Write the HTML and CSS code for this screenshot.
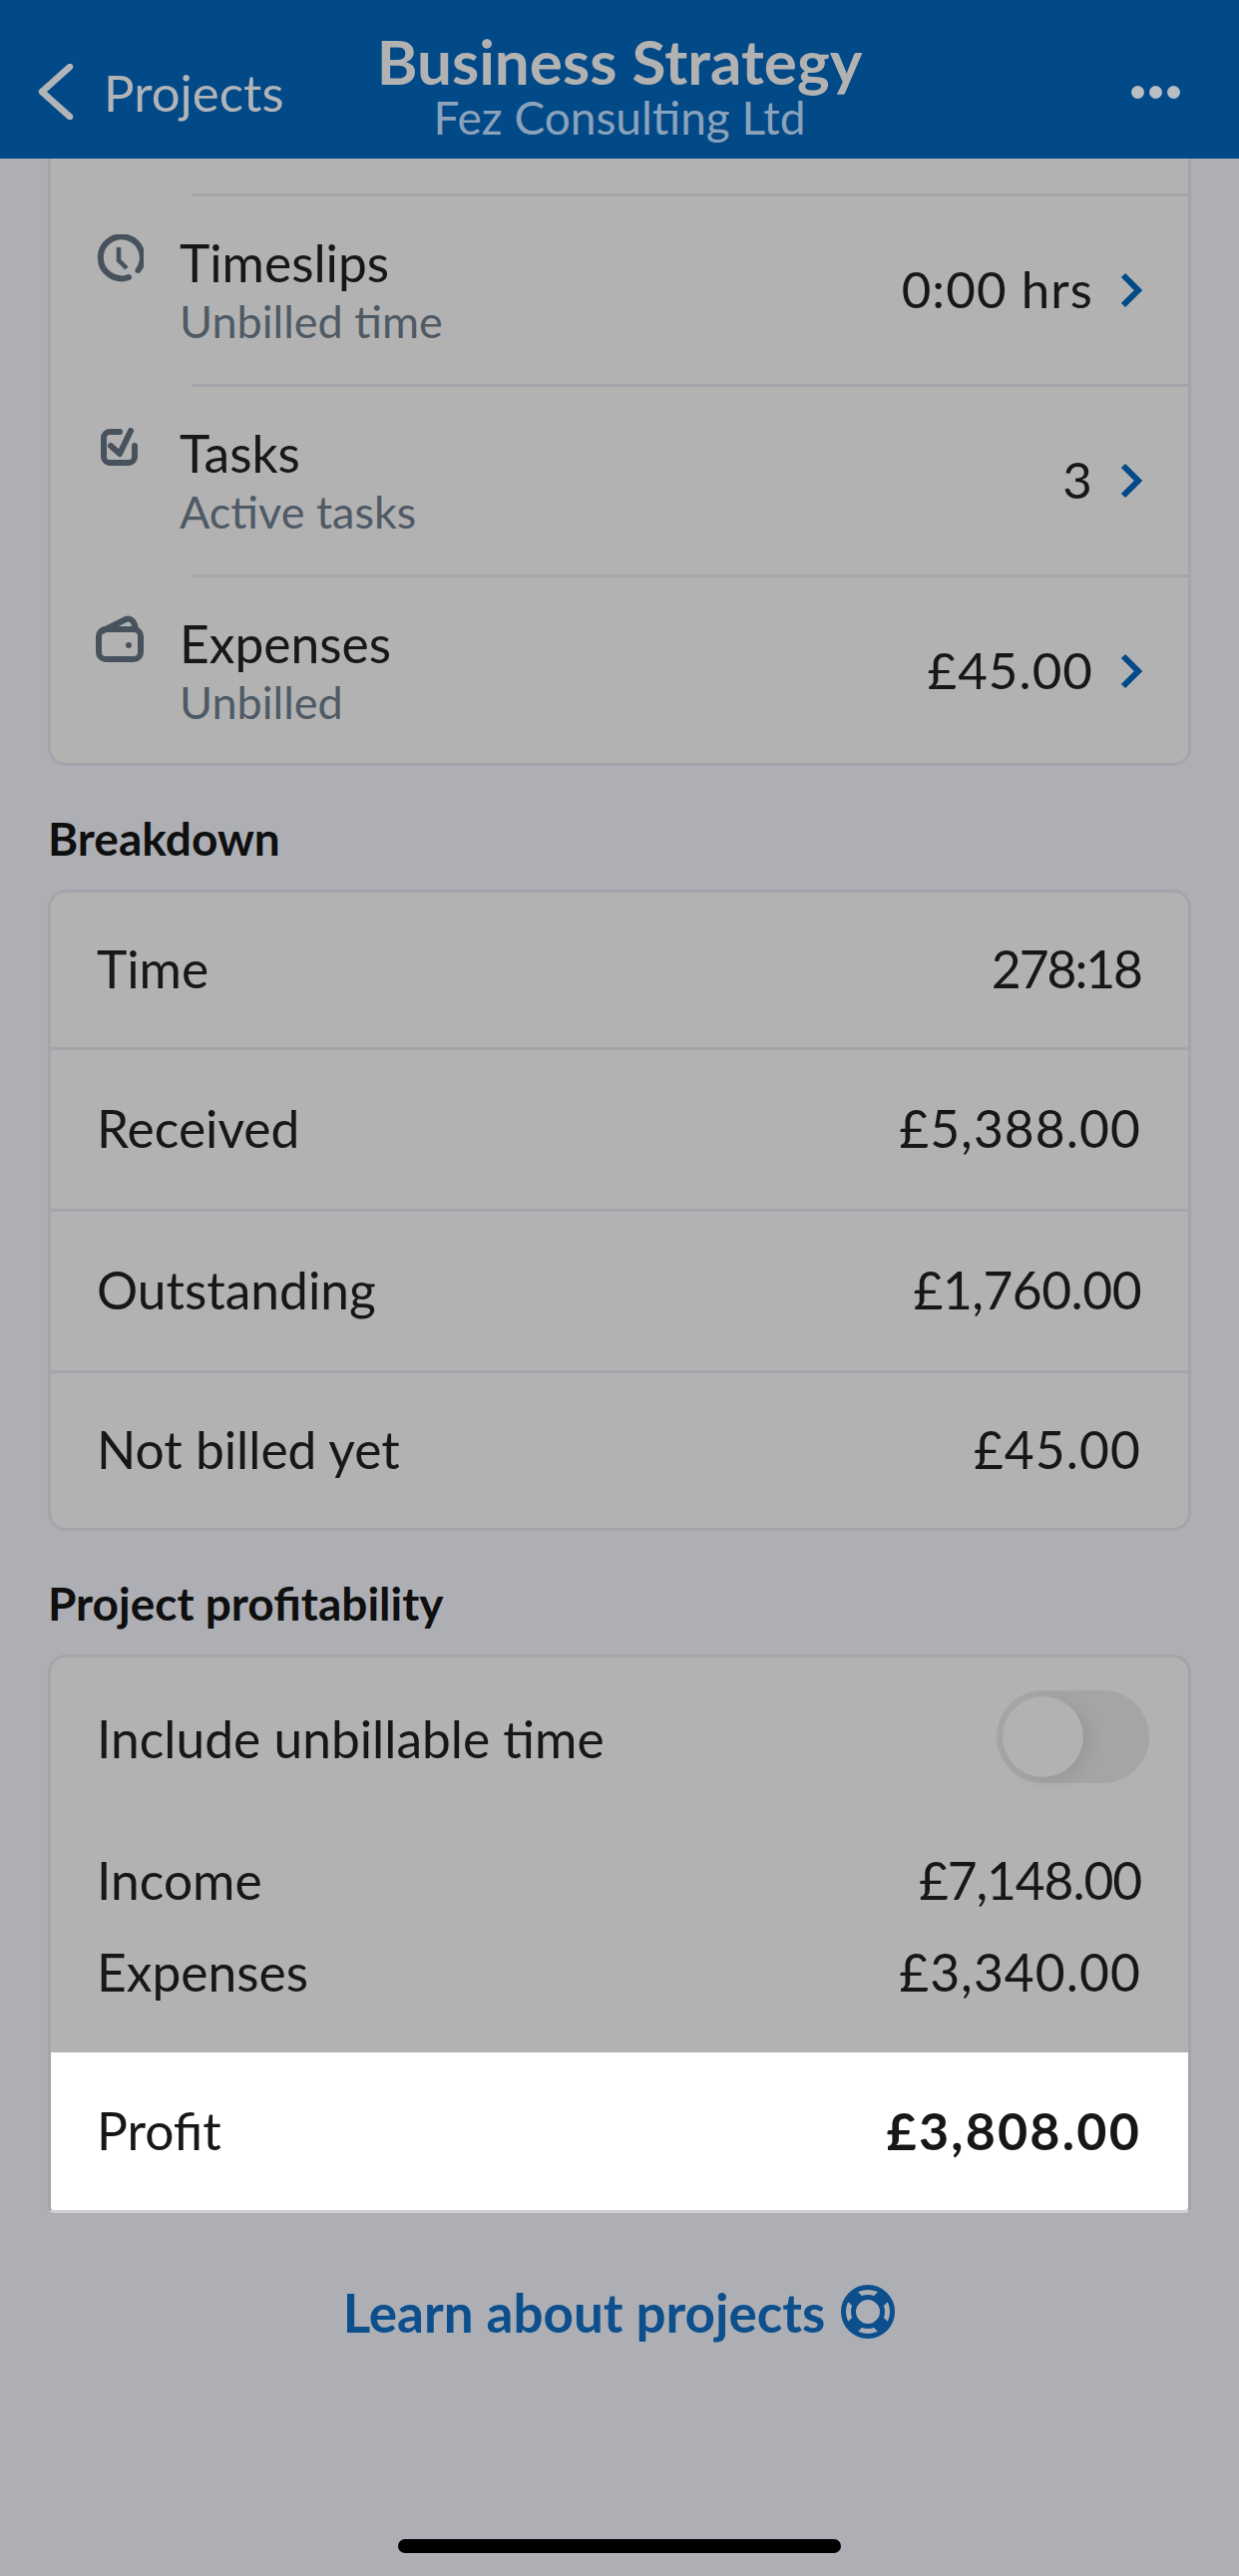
FILE: index.html
```html
<!DOCTYPE html>
<html lang="en">
<head>
<meta charset="utf-8">
<title>Business Strategy</title>
<link rel="stylesheet" href="styles.css">
</head>
<body>
<div class="screen">
  <header class="nav">
    <div class="nav-back">
      <svg class="nav-chevron" viewBox="0 0 36 56"><path d="M32 3 L4 28 L32 53" /></svg>
      <span class="nav-back-label">Projects</span>
    </div>
    <div class="nav-title">
      <div class="nav-title-main">Business Strategy</div>
      <div class="nav-title-sub">Fez Consulting Ltd</div>
    </div>
    <div class="nav-more"><i></i><i></i><i></i></div>
  </header>

  <main class="content">
    <section class="card card-top">
      <div class="stub"></div>
      <div class="link-row with-line">
        <svg class="row-icon" viewBox="0 0 48 48"><path class="ico" d="M42.5 36 A21 21 0 1 0 33 43"/><path class="ico thin" d="M23 13 V26 L31 34"/></svg>
        <div class="row-text"><div class="row-title">Timeslips</div><div class="row-sub">Unbilled time</div></div>
        <div class="row-value num">0:00 hrs</div>
        <svg class="row-chevron" viewBox="0 0 24 36"><path d="M4 3 L19 18 L4 33"/></svg>
      </div>
      <div class="link-row with-line">
        <svg class="row-icon" viewBox="0 0 48 48"><path class="ico" d="M24 7 H14 A6 6 0 0 0 8 13 V32 A6 6 0 0 0 14 38 H33 A6 6 0 0 0 39 32 V21"/><path class="ico" d="M15 21 L24 29 L35 6"/></svg>
        <div class="row-text"><div class="row-title">Tasks</div><div class="row-sub">Active tasks</div></div>
        <div class="row-value num">3</div>
        <svg class="row-chevron" viewBox="0 0 24 36"><path d="M4 3 L19 18 L4 33"/></svg>
      </div>
      <div class="link-row">
        <svg class="row-icon" viewBox="0 0 48 48"><rect class="ico" x="3" y="14" width="42" height="30" rx="7"/><path class="ico" d="M6 16 L30 4 C35 2 39 6 40 14"/><circle class="dot" cx="33" cy="30" r="3"/></svg>
        <div class="row-text"><div class="row-title">Expenses</div><div class="row-sub">Unbilled</div></div>
        <div class="row-value num">£45.00</div>
        <svg class="row-chevron" viewBox="0 0 24 36"><path d="M4 3 L19 18 L4 33"/></svg>
      </div>
    </section>

    <h2 class="section-title">Breakdown</h2>
    <section class="card card-breakdown">
      <div class="kv-row"><span>Time</span><span class="num num-3">278:18</span></div>
      <div class="kv-row"><span>Received</span><span class="num">£5,388.00</span></div>
      <div class="kv-row"><span>Outstanding</span><span class="num num-1">£1,760.00</span></div>
      <div class="kv-row"><span>Not billed yet</span><span class="num">£45.00</span></div>
    </section>

    <h2 class="section-title">Project profitability</h2>
    <section class="card card-profit">
      <div class="toggle-row">
        <span>Include unbillable time</span>
        <div class="toggle"><div class="toggle-knob"></div></div>
      </div>
      <div class="pair-group">
        <div class="pair"><span>Income</span><span class="num num-2">£7,148.00</span></div>
        <div class="pair"><span>Expenses</span><span class="num">£3,340.00</span></div>
      </div>
      <div class="profit"><span>Profit</span><strong class="profit-value">£3,808.00</strong></div>
    </section>

    <div class="learn">
      <span>Learn about projects</span>
      <svg class="learn-icon" viewBox="0 0 56 56">
        <circle cx="28" cy="28" r="24.5" class="lb"/>
        <circle cx="28" cy="28" r="14.5" class="lb"/>
        <path class="lb-bar" d="M11 11 L19.5 19.5 M45 11 L36.5 19.5 M11 45 L19.5 36.5 M45 45 L36.5 36.5"/>
      </svg>
    </div>
  </main>

  <div class="home-indicator"></div>
</div>
</body>
</html>
```
FILE: styles.css
```css
* { box-sizing: border-box; }
html, body { margin: 0; padding: 0; }
body { width: 1242px; height: 2583px; overflow: hidden; background: #adafb5; font-family: Lato, "Liberation Sans", sans-serif; color: #171717; }
.screen { position: relative; width: 1242px; height: 2583px; display: flex; flex-direction: column; }

.nav { height: 159px; flex: none; background: #024988; display: flex; align-items: flex-start; justify-content: space-between; padding: 0 35px 0 38px; position: relative; }
.nav-back { display: flex; align-items: center; gap: 30px; height: 84px; margin-top: 50px; }
.nav-chevron { width: 36px; height: 56px; fill: none; stroke: #b2b4b8; stroke-width: 6.5; stroke-linecap: round; stroke-linejoin: round; }
.nav-back-label { font-size: 51px; color: #b2b4b8; }
.nav-title { position: absolute; left: 0; right: 0; top: 28px; text-align: center; }
.nav-title-main { font-size: 62px; line-height: 67px; font-weight: 700; color: #b2b2b2; }
.nav-title-sub { font-size: 46px; line-height: 46px; color: #8ba2bb; }
.nav-more { display: flex; gap: 5px; margin-top: 86px; margin-right: 24px; }
.nav-more i { width: 13px; height: 13px; border-radius: 50%; background: #b9bdc4; }

.content { flex: 1; padding: 0 48px; display: flex; flex-direction: column; }
.card { background: #b2b2b2; border: 3px solid #a4a5aa; border-radius: 18px; }
.card-top { border-top: 0; border-top-left-radius: 0; border-top-right-radius: 0; height: 609px; }
.stub { height: 38px; margin-left: 141px; border-bottom: 3px solid #a4a5aa; }
.link-row { height: 191px; display: flex; align-items: center; padding: 0 45px 0 45px; position: relative; }
.with-line::after { content: ""; position: absolute; left: 141px; right: 0; bottom: 0; height: 3px; background: #a4a5aa; }
.row-icon { width: 48px; height: 48px; align-self: flex-start; margin-top: 38px; flex: none; }
.ico { fill: none; stroke: #47525d; stroke-width: 6; stroke-linecap: round; stroke-linejoin: round; }
.thin { stroke-width: 4.5; stroke-linecap: butt; stroke-linejoin: miter; }
.dot { fill: #47525d; }
.row-text { margin-left: 36px; flex: 1; padding-bottom: 4px; }
.row-title { font-size: 51.5px; line-height: 60px; }
.row-sub { font-size: 45px; line-height: 54px; color: #4f5a65; margin-top: 2px; }
.row-value { font-size: 51px; margin-right: 26px; padding-bottom: 6px; }
.row-chevron { width: 24px; height: 36px; margin-bottom: 3px; fill: none; stroke: #024988; stroke-width: 6; stroke-linejoin: miter; }
.num { letter-spacing: 1.1px; }
.num-1 { letter-spacing: -0.5px; }
.num-2 { letter-spacing: -1.1px; }
.num-3 { letter-spacing: -2px; }

.section-title { font-size: 46px; font-weight: 700; margin: 37px 0 15px; line-height: 72px; height: 72px; color: #0f0f0f; }
.kv-row { height: 162px; display: flex; align-items: center; justify-content: space-between; padding: 0 47px 4px 46px; font-size: 51.5px; border-bottom: 3px solid #a4a5aa; }
.kv-row:first-child { height: 158px; }
.kv-row:last-child { border-bottom: 0; height: 155px; }

.card-profit { height: 560px; display: flex; flex-direction: column; position: relative; overflow: hidden; border-radius: 18px 18px 6px 6px; border-bottom-color: #d0d1d4; }
.toggle-row { height: 162px; display: flex; align-items: center; justify-content: space-between; font-size: 51.5px; padding: 0 39px 0 46px; }
.toggle { width: 153px; height: 93px; border-radius: 47px; background: #a5a5a5; margin-bottom: 4px; padding: 6px; }
.toggle-knob { width: 81px; height: 81px; border-radius: 50%; background: #b2b2b2; box-shadow: 8px 4px 16px rgba(0, 0, 0, 0.07); }
.pair-group { padding: 15px 47px 0 46px; flex: 1; }
.pair { display: flex; justify-content: space-between; font-size: 51.5px; height: 92px; align-items: center; }
.profit { height: 158px; background: #fff; display: flex; align-items: center; justify-content: space-between; padding: 0 47px 2px 46px; font-size: 51.5px; flex: none; }
.profit-value { font-weight: 700; font-size: 52px; letter-spacing: 2.2px; }

.learn { display: flex; align-items: center; justify-content: center; gap: 15px; font-size: 53px; font-weight: 700; color: #0c4f8c; margin-top: 54px; height: 90px; }
.learn-icon { width: 56px; height: 56px; fill: none; }
.lb { fill: none; stroke: #0c4f8c; stroke-width: 5; }
.lb-bar { fill: none; stroke: #0c4f8c; stroke-width: 14; }

.home-indicator { position: absolute; left: 399px; bottom: 23px; width: 444px; height: 14px; border-radius: 7px; background: #000; }
```
